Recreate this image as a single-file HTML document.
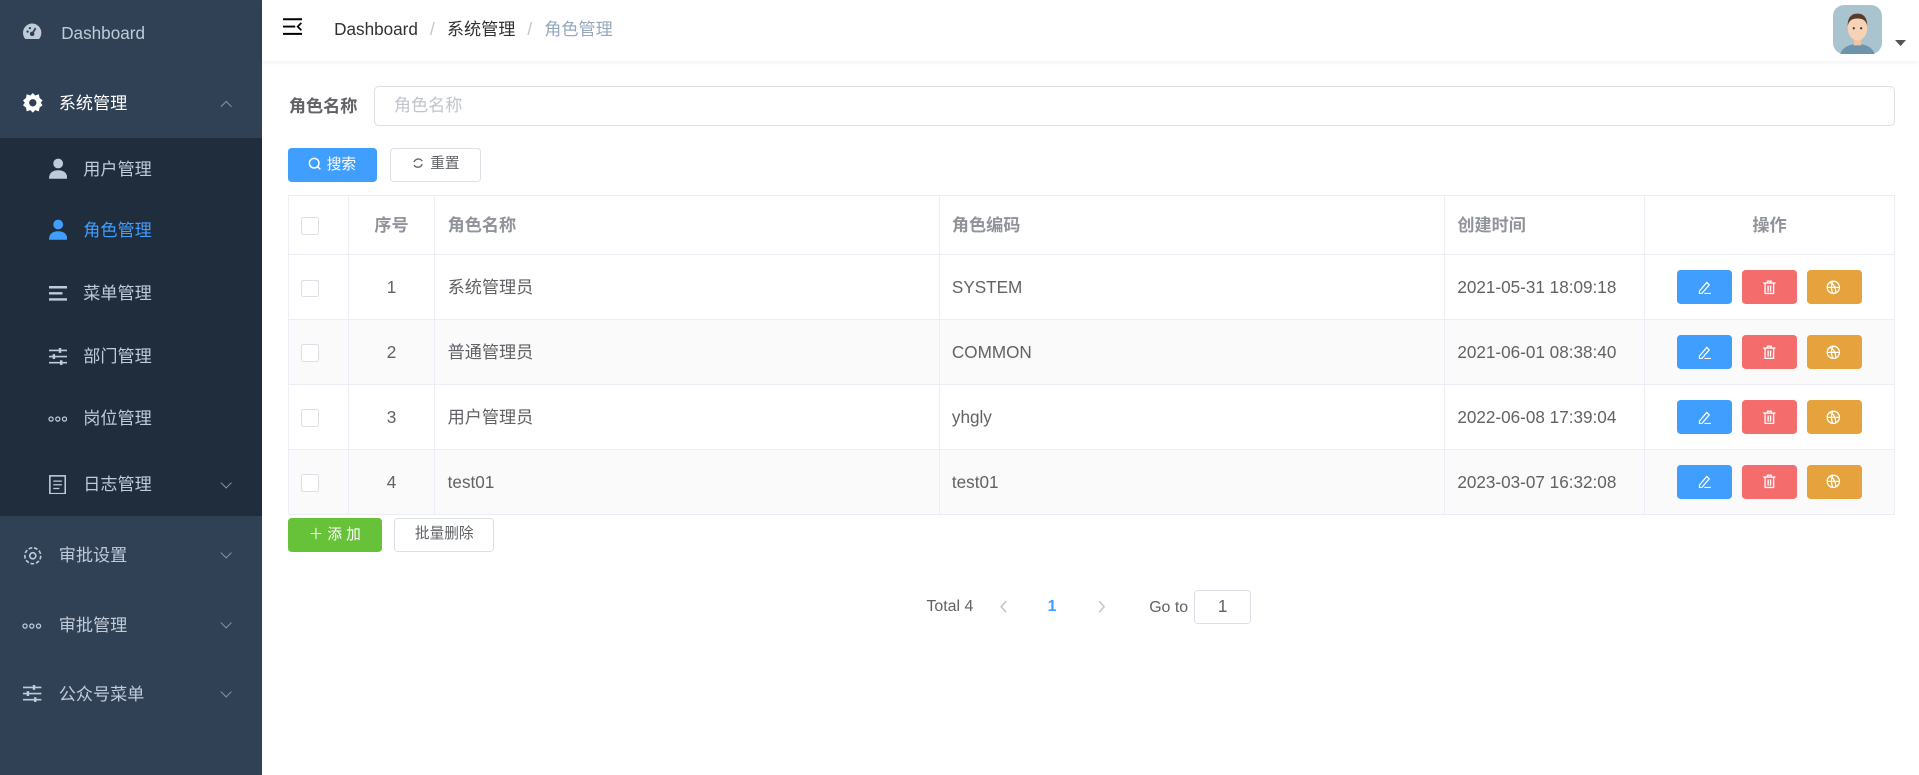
<!DOCTYPE html>
<html><head><meta charset="utf-8"><style>
html,body{margin:0;padding:0;width:1919px;height:775px;overflow:hidden;background:#fff}
#w{zoom:1.22385;width:1568px;height:633px;position:relative;font-family:"Liberation Sans","Noto Sans CJK SC",sans-serif;font-size:14px;color:#606266}
.abs{position:absolute}
#side{left:0;top:0;width:214px;height:633px;background:#304156}
#sub{left:0;top:113px;width:214px;height:309px;background:#1f2d3d}
.mi{position:absolute;left:0;width:214px;color:#bfcbd9;font-size:14px;line-height:20px}
.mi .t{position:absolute}
.mi svg{position:absolute}
.arr{position:absolute;left:181px;width:6px;height:6px;border-right:1px solid #909399;border-bottom:1px solid #909399;transform:rotate(45deg)}
.arr.up{transform:rotate(-135deg)}
#hdr{left:214px;top:0;width:1354px;height:50px;background:#fff;box-shadow:0 1px 4px rgba(0,21,41,.08)}
.btn{position:absolute;height:28px;border-radius:3px;font-size:12px;line-height:28px;text-align:center;box-sizing:border-box}
table{border-collapse:collapse;position:absolute;left:235px;top:159px;width:1313px;table-layout:fixed}
td,th{border:1px solid #ebeef5;padding:0 10px;text-align:left;font-size:14px;line-height:20px;vertical-align:middle}
th{height:48px;color:#909399;font-weight:bold}
tr.r{height:53px}
tr.s td{background:#fafafa}
.cb{display:inline-block;width:13px;height:13px;border:1px solid #dcdfe6;border-radius:2px;background:#fff;vertical-align:middle}
.ab{display:inline-block;width:45px;height:28px;border-radius:3px;margin:0 4px;vertical-align:middle;position:relative}
.ab svg{position:absolute;left:16px;top:8px}
</style></head><body><div id="w">
<div id="side" class="abs"></div>
<div id="sub" class="abs"></div>
<div class="mi" style="top:17px"><svg style="left:19px;top:2px" width="15" height="14" viewBox="0 0 16 14"><path d="M8 0A8 8 0 0 0 0 8c0 2 .7 4 2 5.5h12C15.3 12 16 10 16 8A8 8 0 0 0 8 0z" fill="#bfcbd9"/><circle cx="8" cy="9" r="2" fill="#304156"/><path d="M8 9L11 4" stroke="#304156" stroke-width="1.5"/><circle cx="4" cy="7" r="1" fill="#304156"/><circle cx="6" cy="4" r="1" fill="#304156"/></svg><span class="t" style="left:50px">Dashboard</span></div>
<div class="mi" style="top:74px"><svg style="left:19px;top:2px" width="16" height="16" viewBox="0 0 16 16"><path d="M8 0l2 2 3-1 .5 3 2.5 2-1.5 2 1.5 2-2.5 2-.5 3-3-1-2 2-2-2-3 1-.5-3L0 10l1.5-2L0 6l2.5-2L3 1l3 1z" fill="#fff"/><circle cx="8" cy="8" r="3" fill="#304156"/></svg><span class="t" style="left:48px;color:#fff">系统管理</span><i class="arr up" style="top:9px"></i></div>
<div class="mi" style="top:128px"><svg style="left:40px;top:1px" width="15" height="17" viewBox="0 0 15 17"><circle cx="7.5" cy="4.5" r="4" fill="#bfcbd9"/><path d="M0 17c0-5 3-7 7.5-7S15 12 15 17z" fill="#bfcbd9"/></svg><span class="t" style="left:68px">用户管理</span></div>
<div class="mi" style="top:178px;color:#409eff"><svg style="left:40px;top:1px" width="15" height="17" viewBox="0 0 15 17"><circle cx="7.5" cy="4.5" r="4" fill="#409eff"/><path d="M0 17c0-5 3-7 7.5-7S15 12 15 17z" fill="#409eff"/></svg><span class="t" style="left:68px">角色管理</span></div>
<div class="mi" style="top:230px"><svg style="left:40px;top:4px" width="15" height="12" viewBox="0 0 15 12"><path d="M0 1h15M0 6h11M0 11h15" stroke="#bfcbd9" stroke-width="2"/></svg><span class="t" style="left:68px">菜单管理</span></div>
<div class="mi" style="top:281px"><svg style="left:40px;top:3px" width="15" height="14" viewBox="0 0 15 14"><path d="M0 2h15M0 7h15M0 12h15" stroke="#bfcbd9" stroke-width="1.3"/><path d="M9 0v4M4 5v4M10 10v4" stroke="#bfcbd9" stroke-width="2"/></svg><span class="t" style="left:68px">部门管理</span></div>
<div class="mi" style="top:332px"><svg style="left:39px;top:8px" width="16" height="5"><circle cx="2.5" cy="2.5" r="1.7" fill="none" stroke="#bfcbd9"/><circle cx="8" cy="2.5" r="1.7" fill="none" stroke="#bfcbd9"/><circle cx="13.5" cy="2.5" r="1.7" fill="none" stroke="#bfcbd9"/></svg><span class="t" style="left:68px">岗位管理</span></div>
<div class="mi" style="top:386px"><svg style="left:40px;top:2px" width="14" height="16" viewBox="0 0 14 16"><rect x=".7" y=".7" width="12.6" height="14.6" fill="none" stroke="#bfcbd9" stroke-width="1.3"/><path d="M3.5 5h7M3.5 8h7M3.5 11h5" stroke="#bfcbd9"/></svg><span class="t" style="left:68px">日志管理</span><i class="arr" style="top:5px"></i></div>
<div class="mi" style="top:444px"><svg style="left:19px;top:2px" width="16" height="16" viewBox="0 0 16 16"><circle cx="8" cy="8" r="6.5" fill="none" stroke="#bfcbd9" stroke-width="1.3" stroke-dasharray="3 1.5"/><circle cx="8" cy="8" r="2.5" fill="none" stroke="#bfcbd9" stroke-width="1.3"/></svg><span class="t" style="left:48px">审批设置</span><i class="arr" style="top:5px"></i></div>
<div class="mi" style="top:501px"><svg style="left:18px;top:8px" width="16" height="5"><circle cx="2.5" cy="2.5" r="1.7" fill="none" stroke="#bfcbd9"/><circle cx="8" cy="2.5" r="1.7" fill="none" stroke="#bfcbd9"/><circle cx="13.5" cy="2.5" r="1.7" fill="none" stroke="#bfcbd9"/></svg><span class="t" style="left:48px">审批管理</span><i class="arr" style="top:5px"></i></div>
<div class="mi" style="top:557px"><svg style="left:19px;top:3px" width="15" height="14" viewBox="0 0 15 14"><path d="M0 2h15M0 7h15M0 12h15" stroke="#bfcbd9" stroke-width="1.3"/><path d="M9 0v4M4 5v4M10 10v4" stroke="#bfcbd9" stroke-width="2"/></svg><span class="t" style="left:48px">公众号菜单</span><i class="arr" style="top:5px"></i></div>

<div id="hdr" class="abs"></div>
<svg class="abs" style="left:231px;top:15px" width="16" height="14" viewBox="0 0 16 14"><path d="M0 1h16M0 7h10M0 13h16" stroke="#000" stroke-width="1.6"/><path d="M15 4l-3 3 3 3" fill="none" stroke="#000" stroke-width="1.4"/></svg>
<div class="abs" style="left:273px;top:14px;line-height:20px;color:#303133">Dashboard <span style="color:#c0c4cc;margin:0 6px">/</span> 系统管理 <span style="color:#c0c4cc;margin:0 6px">/</span> <span style="color:#97a8be">角色管理</span></div>
<svg class="abs" style="left:1498px;top:4px" width="40" height="40" viewBox="0 0 40 40"><rect width="40" height="40" rx="9" fill="#a9c3cf"/><path d="M6 40c2-6 8-8 14-8s12 2 14 8z" fill="#6d94ad"/><rect x="17" y="25" width="6" height="8" fill="#f0c4a4"/><ellipse cx="20" cy="19" rx="8" ry="10" fill="#f6d2b6"/><path d="M12 17c0-8 4-10 8-10s8 2 8 10c-1-4-3-6-8-6s-7 2-8 6z" fill="#5a3a2a"/><circle cx="17" cy="19" r=".9" fill="#333"/><circle cx="23" cy="19" r=".9" fill="#333"/></svg>
<svg class="abs" style="left:1548px;top:33px" width="9" height="5"><path d="M0 0h9L4.5 5z" fill="#555"/></svg>

<div class="abs" style="left:236px;top:77px;font-weight:bold;line-height:20px">角色名称</div>
<div class="abs" style="left:306px;top:70px;width:1242px;height:33px;border:1px solid #dcdfe6;border-radius:4px;box-sizing:border-box;color:#c0c4cc;line-height:31px;padding-left:15px">角色名称</div>
<div class="btn" style="left:235px;top:121px;width:73px;background:#409eff;color:#fff"><svg width="11" height="11" viewBox="0 0 12 12" style="vertical-align:-1px;margin-right:4px"><circle cx="5.5" cy="5.5" r="4.3" fill="none" stroke="#fff" stroke-width="1.3"/><path d="M8.5 8.5L11 11" stroke="#fff" stroke-width="1.3"/></svg>搜索</div>
<div class="btn" style="left:319px;top:121px;width:74px;border:1px solid #dcdfe6;color:#606266;line-height:26px"><svg width="10" height="10" viewBox="0 0 12 12" style="vertical-align:-1px;margin-right:5px"><path d="M10 4A4.5 4.5 0 0 0 2 5M2 8a4.5 4.5 0 0 0 8-1" fill="none" stroke="#606266" stroke-width="1.3"/></svg>重置</div>

<table>
<colgroup><col style="width:49px"><col style="width:71px"><col style="width:412px"><col style="width:413px"><col style="width:163px"><col style="width:205px"></colgroup>
<tr><th><span class="cb"></span></th><th style="text-align:center">序号</th><th>角色名称</th><th>角色编码</th><th>创建时间</th><th style="text-align:center">操作</th></tr>
<tr class="r"><td><span class="cb"></span></td><td style="text-align:center">1</td><td>系统管理员</td><td>SYSTEM</td><td>2021-05-31 18:09:18</td><td style="text-align:center">ACT</td></tr>
<tr class="r s"><td><span class="cb"></span></td><td style="text-align:center">2</td><td>普通管理员</td><td>COMMON</td><td>2021-06-01 08:38:40</td><td style="text-align:center">ACT</td></tr>
<tr class="r"><td><span class="cb"></span></td><td style="text-align:center">3</td><td>用户管理员</td><td>yhgly</td><td>2022-06-08 17:39:04</td><td style="text-align:center">ACT</td></tr>
<tr class="r s"><td><span class="cb"></span></td><td style="text-align:center">4</td><td>test01</td><td>test01</td><td>2023-03-07 16:32:08</td><td style="text-align:center">ACT</td></tr>
</table>
<script>
var a='<span class="ab" style="background:#409eff"><svg width="12" height="12" viewBox="0 0 12 12"><path d="M2 9L8 2l2 2-6 7H2z M6 11h6" fill="none" stroke="#fff" stroke-width="1"/></svg></span><span class="ab" style="background:#f56c6c"><svg width="12" height="12" viewBox="0 0 12 12"><path d="M1 2.5h10M4.5 2.5V1h3v1.5M2.5 2.5V11h7V2.5M5 4.5v5M7 4.5v5" fill="none" stroke="#fff" stroke-width="1.1"/></svg></span><span class="ab" style="background:#e6a23c"><svg width="12" height="12" viewBox="0 0 12 12"><circle cx="6" cy="6" r="5" fill="none" stroke="#fff" stroke-width="1.1"/><path d="M1 6h10M6 1c-2 2-2 8 0 10M3 2c3 1 5 4 5 9" fill="none" stroke="#fff" stroke-width="1"/></svg></span>';
document.querySelectorAll('td').forEach(function(t){if(t.textContent==='ACT')t.innerHTML=a;});
</script>
<div class="btn" style="left:235px;top:423px;width:77px;background:#67c23a;color:#fff;font-size:12px">＋ 添 加</div>
<div class="btn" style="left:322px;top:423px;width:82px;border:1px solid #dcdfe6;color:#606266;line-height:26px">批量删除</div>

<div class="abs" style="left:757px;top:487px;font-size:13px;line-height:18px">Total 4</div>
<svg class="abs" style="left:817px;top:490px" width="6" height="11"><path d="M5 1L1 5.5 5 10" fill="none" stroke="#c0c4cc" stroke-width="1.3"/></svg>
<div class="abs" style="left:856px;top:487px;font-size:13px;line-height:18px;color:#409eff;font-weight:bold">1</div>
<svg class="abs" style="left:897px;top:490px" width="6" height="11"><path d="M1 1l4 4.5L1 10" fill="none" stroke="#c0c4cc" stroke-width="1.3"/></svg>
<div class="abs" style="left:939px;top:488px;font-size:13px;line-height:18px">Go to</div>
<div class="abs" style="left:976px;top:482px;width:46px;height:28px;border:1px solid #dcdfe6;border-radius:3px;box-sizing:border-box;text-align:center;line-height:26px;font-size:14px">1</div>
</div></body></html>
